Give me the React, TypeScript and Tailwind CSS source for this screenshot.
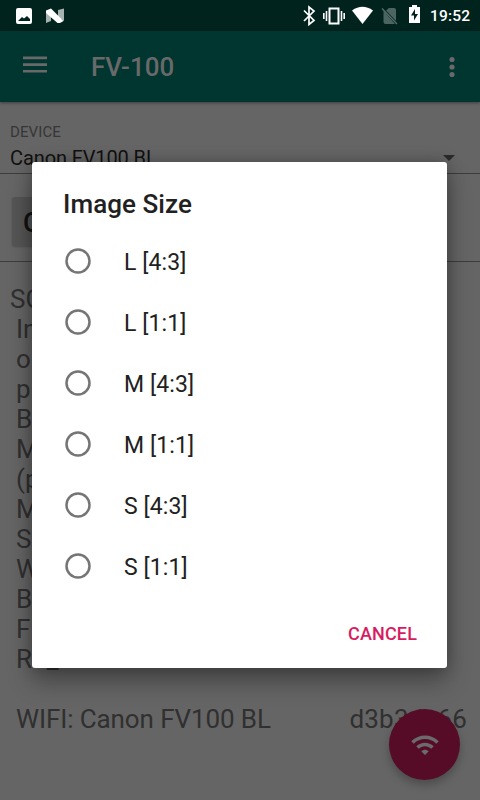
import React from "react";

const sizes = ["L [4:3]", "L [1:1]", "M [4:3]", "M [1:1]", "S [4:3]", "S [1:1]"];
const info = ["In", "o", "p", "B", "M", "(p", "M", "S", "W", "B", "F"];

function StatusBar() {
  return (
    <div className="relative h-[31px] shrink-0 bg-[#00231e]">
      <svg className="block" width="480" height="31" viewBox="0 0 480 31" fill="#fff">
        <path fillRule="evenodd" d="M18 8h12q2 0 2 2v12q0 2-2 2h-12q-2 0-2-2v-12q0-2 2-2zm0 13h12v-2l-3-3-3 2.500-2-1.500z" />
        <path opacity=".65" d="M46 10.500l5 4V21l-5 2zM58 10l6-1.500V21l-6-4z" />
        <path d="M46 10.500l5-2L63.500 21l-3.500 2h-2.500L46 13z" />
        <path d="M304 10.500l10 10-5 4V7l5 4-10 10" fill="none" stroke="#fff" strokeWidth="1.700" />
        <path d="M329.500 8.500h9v15h-9z" fill="none" stroke="#fff" strokeWidth="2" />
        <path d="M326.500 11v10M341.500 11v10M323.800 13v6M344.200 13v6" fill="none" stroke="#fff" strokeWidth="1.600" />
        <path d="M352 10.500q10.500-7.500 21 0L362.500 24z" />
        <path opacity=".3" d="M386 10.500l3-2.500h5q2 0 2 2v11zM383.500 11l11.500 13h-9.500q-2 0-2-2z" />
        <path opacity=".35" d="M382 8.500l15 15.500" fill="none" stroke="#fff" strokeWidth="1.300" />
        <path fillRule="evenodd" d="M409 7h3V5h5v2h3v16h-11zm6 2l-4 6.500h3v5l4-6.500h-3z" />
      </svg>
      <span className="absolute left-[430px] top-[6px] text-[15.500px] leading-5 font-medium tracking-[0.2px] text-white">19:52</span>
    </div>
  );
}

function Toolbar() {
  return (
    <header className="relative flex h-[71px] shrink-0 items-center bg-[#003530] pl-[23px] pr-[25px] text-[#696969] shadow-[0_1px_3px_rgba(0,0,0,0.4)]">
      <svg className="-mt-[3px]" width="24" height="18" viewBox="0 0 24 18" fill="currentColor">
        <path d="M0 .5h24v2.700H0zM0 7.200h24v2.700H0zM0 13.900h24v2.700H0z" />
      </svg>
      <h1 className="ml-11 text-[26px] font-medium leading-8">FV-100</h1>
      <svg className="ml-auto" width="6" height="22" viewBox="0 0 6 22" fill="currentColor">
        <circle cx="3" cy="3.500" r="2.600" /><circle cx="3" cy="11" r="2.600" /><circle cx="3" cy="18.500" r="2.600" />
      </svg>
    </header>
  );
}

export default function App() {
  return (
    <div className="relative flex h-[800px] w-[480px] flex-col overflow-hidden bg-[#656565] font-['Roboto',sans-serif]">
      <StatusBar />
      <Toolbar />
      <section className="flex h-[72px] shrink-0 flex-col border-b border-[#3d3d3d] pl-[10px] pr-[25px] pt-[21px]">
        <span className="text-[15px] leading-[18px] tracking-[0.1px] text-[#363636]">DEVICE</span>
        <div className="mt-[5px] flex items-center justify-between text-[20px] leading-6 tracking-[-0.100px] text-[#111]">
          <span>Canon FV100 BL</span>
          <svg width="12" height="6" viewBox="0 0 12 6" fill="#2b2b2b"><path d="M0 0h12L6 6z" /></svg>
        </div>
      </section>
      <section className="h-[88px] shrink-0 border-b border-[#3d3d3d] pl-3 pt-[23px]">
        <div className="flex h-[49px] w-[150px] items-center rounded-[3px] bg-[#555] pl-[11px] pt-[3px] text-[27px] font-medium text-[#111] shadow-[0_1px_2px_rgba(0,0,0,0.2)]">C</div>
      </section>
      <main className="flex-1 pl-[10px] pr-[13px] pt-[22px] text-[26px] leading-[30px] text-[#303030]">
        <p>SC</p>
        <div className="pl-[6px]">
          {info.map((line, i) => <p key={i}>{line}</p>)}
          <p>RE_</p>
          <div className="mt-[30px] flex justify-between tracking-[-0.100px]"><span>WIFI: Canon FV100 BL</span><span className="tracking-[0.200px]">d3b3dc66</span></div>
        </div>
      </main>
      <button className="absolute left-[389px] top-[709px] flex size-[71px] items-center justify-center rounded-full bg-[#560b26] shadow-[0_5px_9px_rgba(0,0,0,0.25)]">
        <svg width="30" height="30" viewBox="0 0 24 24" fill="#6b6b6b">
          <path d="M1 9l2 2c4.970-4.970 13.030-4.970 18 0l2-2C16.930 2.930 7.080 2.930 1 9zm8 8l3 3 3-3c-1.650-1.660-4.340-1.660-6 0zm-4-4l2 2c2.760-2.760 7.240-2.760 10 0l2-2C15.140 9.140 8.870 9.140 5 13z" />
        </svg>
      </button>
      <div role="dialog" className="absolute left-8 top-[162px] flex h-[506px] w-[415px] flex-col rounded-[3px] bg-white pl-[31px] pr-[30px] pt-[26px] text-[#212121] shadow-[0_14px_24px_rgba(0,0,0,0.3),0_0_16px_rgba(0,0,0,0.25)]">
        <h2 className="text-[26px] font-medium leading-8 tracking-[0.060px]">Image Size</h2>
        <div className="mt-[11px] flex flex-col">
          {sizes.map((size) => (
            <label key={size} className="flex h-[61px] items-center pl-[2px]">
              <svg className="mb-px" width="26" height="26" viewBox="0 0 26 26">
                <circle cx="13" cy="13" r="11.500" fill="none" stroke="#757575" strokeWidth="2.500" />
              </svg>
              <span className="ml-[33px] mt-[2px] text-[23px] leading-7 tracking-[0.100px]">{size}</span>
            </label>
          ))}
        </div>
        <button className="mt-auto mb-[22px] self-end text-[18px] font-medium leading-6 tracking-[0.150px] text-[#d81b60]">CANCEL</button>
      </div>
    </div>
  );
}
